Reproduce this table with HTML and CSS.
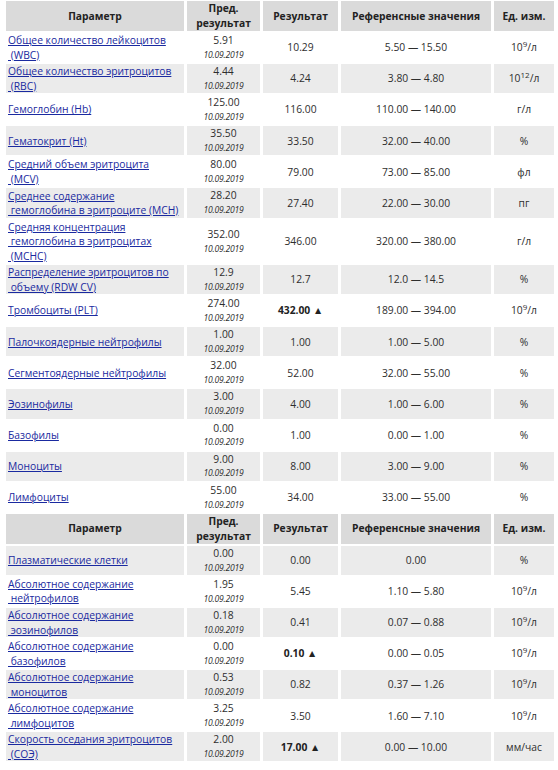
FILE: index.html
```html
<!DOCTYPE html>
<html lang="ru">
<head>
<meta charset="utf-8">
<link rel="stylesheet" href="styles.css">
</head>
<body>
<table class="results">
<colgroup>
<col class="c-param"><col class="c-prev"><col class="c-res"><col class="c-ref"><col class="c-unit">
</colgroup>
<tbody>
<tr class="head"><th>Параметр</th><th>Пред.<br>результат</th><th>Результат</th><th>Референсные значения</th><th>Ед. изм.</th></tr>
<tr><td class="name"><a href="#">Общее количество лейкоцитов<br>&nbsp;(WBC)</a></td><td class="prev"><div class="v">5.91</div><div class="d">10.09.2019</div></td><td>10.29</td><td>5.50 — 15.50</td><td>10<sup>9</sup>/л</td></tr>
<tr class="alt"><td class="name"><a href="#">Общее количество эритроцитов<br>&nbsp;(RBC)</a></td><td class="prev"><div class="v">4.44</div><div class="d">10.09.2019</div></td><td>4.24</td><td>3.80 — 4.80</td><td>10<sup>12</sup>/л</td></tr>
<tr><td class="name"><a href="#">Гемоглобин (Hb)</a></td><td class="prev"><div class="v">125.00</div><div class="d">10.09.2019</div></td><td>116.00</td><td>110.00 — 140.00</td><td>г/л</td></tr>
<tr class="alt"><td class="name"><a href="#">Гематокрит (Ht)</a></td><td class="prev"><div class="v">35.50</div><div class="d">10.09.2019</div></td><td>33.50</td><td>32.00 — 40.00</td><td>%</td></tr>
<tr><td class="name"><a href="#">Средний объем эритроцита<br>&nbsp;(MCV)</a></td><td class="prev"><div class="v">80.00</div><div class="d">10.09.2019</div></td><td>79.00</td><td>73.00 — 85.00</td><td>фл</td></tr>
<tr class="alt"><td class="name"><a href="#">Среднее содержание<br>&nbsp;гемоглобина в эритроците (MCH)</a></td><td class="prev"><div class="v">28.20</div><div class="d">10.09.2019</div></td><td>27.40</td><td>22.00 — 30.00</td><td>пг</td></tr>
<tr><td class="name"><a href="#">Средняя концентрация<br>&nbsp;гемоглобина в эритроцитах<br>&nbsp;(MCHC)</a></td><td class="prev"><div class="v">352.00</div><div class="d">10.09.2019</div></td><td>346.00</td><td>320.00 — 380.00</td><td>г/л</td></tr>
<tr class="alt"><td class="name"><a href="#">Распределение эритроцитов по<br>&nbsp;объему (RDW CV)</a></td><td class="prev"><div class="v">12.9</div><div class="d">10.09.2019</div></td><td>12.7</td><td>12.0 — 14.5</td><td>%</td></tr>
<tr><td class="name"><a href="#">Тромбоциты (PLT)</a></td><td class="prev"><div class="v">274.00</div><div class="d">10.09.2019</div></td><td class="high">432.00 ▲</td><td>189.00 — 394.00</td><td>10<sup>9</sup>/л</td></tr>
<tr class="alt"><td class="name"><a href="#">Палочкоядерные нейтрофилы</a></td><td class="prev"><div class="v">1.00</div><div class="d">10.09.2019</div></td><td>1.00</td><td>1.00 — 5.00</td><td>%</td></tr>
<tr><td class="name"><a href="#">Сегментоядерные нейтрофилы</a></td><td class="prev"><div class="v">32.00</div><div class="d">10.09.2019</div></td><td>52.00</td><td>32.00 — 55.00</td><td>%</td></tr>
<tr class="alt"><td class="name"><a href="#">Эозинофилы</a></td><td class="prev"><div class="v">3.00</div><div class="d">10.09.2019</div></td><td>4.00</td><td>1.00 — 6.00</td><td>%</td></tr>
<tr><td class="name"><a href="#">Базофилы</a></td><td class="prev"><div class="v">0.00</div><div class="d">10.09.2019</div></td><td>1.00</td><td>0.00 — 1.00</td><td>%</td></tr>
<tr class="alt"><td class="name"><a href="#">Моноциты</a></td><td class="prev"><div class="v">9.00</div><div class="d">10.09.2019</div></td><td>8.00</td><td>3.00 — 9.00</td><td>%</td></tr>
<tr><td class="name"><a href="#">Лимфоциты</a></td><td class="prev"><div class="v">55.00</div><div class="d">10.09.2019</div></td><td>34.00</td><td>33.00 — 55.00</td><td>%</td></tr>
<tr class="head"><th>Параметр</th><th>Пред.<br>результат</th><th>Результат</th><th>Референсные значения</th><th>Ед. изм.</th></tr>
<tr class="alt"><td class="name"><a href="#">Плазматические клетки</a></td><td class="prev"><div class="v">0.00</div><div class="d">10.09.2019</div></td><td>0.00</td><td>0.00</td><td>%</td></tr>
<tr><td class="name"><a href="#">Абсолютное содержание<br>&nbsp;нейтрофилов</a></td><td class="prev"><div class="v">1.95</div><div class="d">10.09.2019</div></td><td>5.45</td><td>1.10 — 5.80</td><td>10<sup>9</sup>/л</td></tr>
<tr class="alt"><td class="name"><a href="#">Абсолютное содержание<br>&nbsp;эозинофилов</a></td><td class="prev"><div class="v">0.18</div><div class="d">10.09.2019</div></td><td>0.41</td><td>0.07 — 0.88</td><td>10<sup>9</sup>/л</td></tr>
<tr><td class="name"><a href="#">Абсолютное содержание<br>&nbsp;базофилов</a></td><td class="prev"><div class="v">0.00</div><div class="d">10.09.2019</div></td><td class="high">0.10 ▲</td><td>0.00 — 0.05</td><td>10<sup>9</sup>/л</td></tr>
<tr class="alt"><td class="name"><a href="#">Абсолютное содержание<br>&nbsp;моноцитов</a></td><td class="prev"><div class="v">0.53</div><div class="d">10.09.2019</div></td><td>0.82</td><td>0.37 — 1.26</td><td>10<sup>9</sup>/л</td></tr>
<tr><td class="name"><a href="#">Абсолютное содержание<br>&nbsp;лимфоцитов</a></td><td class="prev"><div class="v">3.25</div><div class="d">10.09.2019</div></td><td>3.50</td><td>1.60 — 7.10</td><td>10<sup>9</sup>/л</td></tr>
<tr class="alt"><td class="name"><a href="#">Скорость оседания эритроцитов<br>&nbsp;(СОЭ)</a></td><td class="prev"><div class="v">2.00</div><div class="d">10.09.2019</div></td><td class="high">17.00 ▲</td><td>0.00 — 10.00</td><td>мм/час</td></tr>
</tbody>
</table>
</body>
</html>
```
FILE: styles.css
```css
html, body {
  margin: 0;
  padding: 0;
  background: #fff;
}
body {
  padding: 0 3px;
  font-family: "Open Sans", "Liberation Sans", sans-serif;
  font-size: 10.3px;
  color: #2e2e2e;
}
.results {
  border-collapse: separate;
  border-spacing: 3px 2px;
  table-layout: fixed;
  width: 554px;
  margin-top: -1px;
}
.c-param { width: 178px; }
.c-prev { width: 73px; }
.c-res { width: 75px; }
.c-ref { width: 150px; }
.c-unit { width: 60px; }
.results th {
  background: #dadada;
  color: #222;
  font-weight: bold;
  font-size: 10.3px;
  line-height: 15px;
  padding: 0;
  height: 30px;
  text-align: center;
  vertical-align: middle;
}
.results td {
  padding: 0 2px;
  text-align: center;
  vertical-align: middle;
  line-height: 14.5px;
  white-space: nowrap;
}
.results tr.alt td {
  background: #ebebeb;
}
.results td.name {
  text-align: left;
  padding: 0 2px;
}
.name a {
  color: #1a2aa0;
  text-decoration: underline;
}
.prev .v {
  line-height: 15.8px;
}
.prev .d {
  font-style: italic;
  font-size: 8.6px;
  line-height: 13.3px;
  letter-spacing: -0.2px;
  color: #2e2e2e;
}
td.high {
  font-weight: bold;
  color: #222;
}
sup {
  font-size: 8px;
  line-height: 0;
  vertical-align: 4px;
}
```
